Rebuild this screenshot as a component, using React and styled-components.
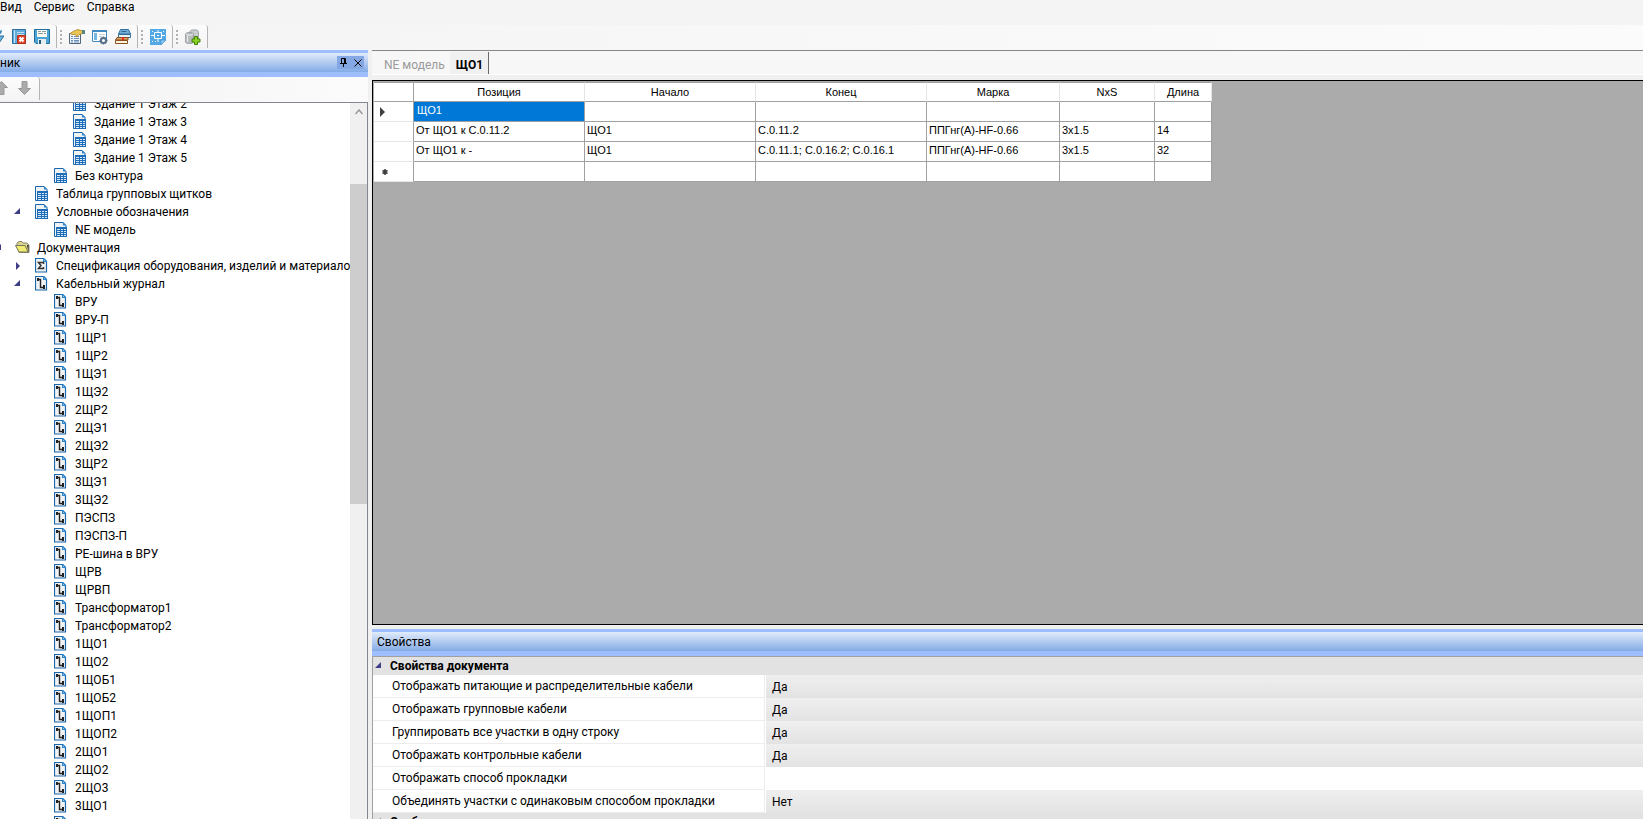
import React from 'react';
import styled, { createGlobalStyle, css } from 'styled-components';

const uiFont = 'Roboto, "Open Sans", sans-serif';
const gridFont = '"Liberation Sans", Arial, sans-serif';

const colors = {
  accent: '#9ebeff',
  line: '#828790',
  gridLine: '#a0a0a0',
  selection: '#0078d7',
  arrow: '#3d3d85'
};

const GlobalStyle = createGlobalStyle`
  * {
    box-sizing: border-box;
  }

  body {
    margin: 0;
    overflow: hidden;
    font-family: ${uiFont};
    font-size: 12px;
    line-height: 18px;
    color: #000;
    background: #f0f0f0;
  }

  button {
    font: inherit;
    color: inherit;
    border: 0;
    padding: 0;
    background: none;
  }
`;

const Window = styled.div`
  display: flex;
  flex-direction: column;
  height: 100vh;
`;

const MenuBar = styled.nav`
  display: flex;
  flex: none;
  gap: 12px;
  height: 25px;
  padding-bottom: 12px;
  align-items: center;
  background: #f4f4f4;
`;

const MenuItem = styled.button`
  line-height: 16px;
`;

const ToolBar = styled.div`
  display: flex;
  flex: none;
  height: 25px;
  background: linear-gradient(to right, #f4f4f4, #fbfbfb);
`;

const ToolGroup = styled.div`
  display: flex;
  align-items: center;
  gap: 7px;
  height: 23px;
  padding: 0 6px 0 ${props => (props.$first ? '0' : '3px')};
  background: linear-gradient(#fcfcfc, #f4f4f4);
  border-right: 1px solid #b4b4b4;
  border-radius: 0 3px 0 0;
`;

const Grip = styled.span`
  width: 2px;
  height: 14px;
  background: repeating-linear-gradient(#b0b0b0 0 2px, transparent 2px 4px);
`;

const ToolButton = styled.button`
  display: flex;
  width: ${props => props.$width || 16}px;
  height: 16px;
  justify-content: flex-end;
  overflow: hidden;

  svg {
    flex: none;
  }
`;

const Workspace = styled.div`
  display: grid;
  flex: 1;
  min-height: 0;
  grid-template-columns: 368px minmax(0, 1fr);
  column-gap: 4px;
`;

const Navigator = styled.aside`
  display: flex;
  flex-direction: column;
  min-height: 0;
`;

const Caption = styled.header`
  display: flex;
  flex: none;
  align-items: center;
  justify-content: space-between;
  height: 27px;
  padding: 0 4px 0 ${props => props.$indent || 0}px;
  border-top: 3px solid ${colors.accent};
  border-bottom: 5px solid ${colors.accent};
  background: linear-gradient(#e1ebfb, #84abe6);
`;

const CaptionButtons = styled.div`
  display: flex;
  gap: 1px;
  height: 13px;
  background: #83a8e4;
`;

const CaptionButton = styled.button`
  display: flex;
  width: 13px;
  height: 13px;
  align-items: center;
  justify-content: center;
`;

const MoveBar = styled.div`
  display: flex;
  flex: none;
  height: 25px;
  background: linear-gradient(to right, #f2f2f2, #fbfbfb);

  ${ToolGroup} {
    padding-right: 8px;
  }
`;

const TreeArea = styled.div`
  display: flex;
  flex: 1;
  min-height: 0;
  border-top: 1px solid ${colors.line};
  border-right: 1px solid ${colors.line};
  background: #fff;
`;

const TreeView = styled.div`
  flex: 1;
  min-width: 0;
  overflow: hidden;
`;

const TreeList = styled.ul`
  list-style: none;
  margin: -8px 0 0;
  padding: 0;
`;

const TreeRow = styled.li`
  display: flex;
  align-items: center;
  height: 18px;
  margin-left: ${props => props.$level * 19 - 5}px;
  gap: 7px;
  white-space: nowrap;

  svg {
    flex: none;
  }
`;

const Expander = styled.button`
  display: flex;
  flex: none;
  width: 6px;
  height: 17px;
  padding-top: 4px;
  justify-content: flex-end;
`;

const TreeIcon = styled.span`
  display: flex;
  flex: none;
  width: ${props => (props.$wide ? 15 : 14)}px;
  margin-left: ${props => (props.$wide ? 7 : 8)}px;
`;

const ScrollTrack = styled.div`
  display: flex;
  flex: none;
  flex-direction: column;
  width: 17px;
  background: #f0f0f0;
`;

const ScrollButton = styled.button`
  display: flex;
  height: 17px;
  align-items: center;
  justify-content: center;
`;

const ScrollThumb = styled.div`
  height: 320px;
  margin-top: 64px;
  background: #cdcdcd;
`;

const Documents = styled.main`
  display: flex;
  flex-direction: column;
  min-height: 0;
`;

const TabStrip = styled.div`
  display: flex;
  flex: none;
  height: 25px;
  margin-bottom: 5px;
  padding-left: 6px;
  border-top: 1px solid #868686;
  border-bottom: 1px solid #fff;
  background: #f7f7f7;
`;

const Tab = styled.button`
  padding: 4px 5px 0 6px;
  color: #9a9a9a;

  ${props =>
    props.$active &&
    css`
      color: #000;
      font-weight: 700;
      background: #f0f0f0;
      border-right: 1px solid #696969;
      margin-top: 1px;
      padding-top: 3px;
    `};
`;

const GridArea = styled.section`
  flex: 1;
  min-height: 0;
  padding: 1px;
  border: 1px solid #000;
  border-right: 0;
  background: #ababab;
`;

const JournalTable = styled.table`
  table-layout: fixed;
  width: 838px;
  border-collapse: separate;
  border-spacing: 0;
  font-family: ${gridFont};
  font-size: 11px;
  line-height: 15px;
  background: #fff;
`;

const HeadCell = styled.th`
  height: 20px;
  padding: 0;
  font-weight: 400;
  border-top: 1px solid ${colors.gridLine};
  border-bottom: 1px solid ${colors.gridLine};
  border-right: 1px solid ${props => (props.$dark ? colors.gridLine : '#e5e5e5')};
`;

const Cell = styled.td`
  height: 20px;
  padding: 0 2px 3px;
  vertical-align: middle;
  white-space: nowrap;
  border-right: 1px solid ${colors.gridLine};
  border-bottom: 1px solid ${colors.gridLine};

  ${props =>
    props.$selected &&
    css`
      color: #fff;
      background: ${colors.selection};
      padding-left: 3px;
    `};
`;

const RowMarker = styled.th`
  height: 20px;
  padding: 0 0 0 6px;
  border-right: 1px solid ${colors.gridLine};
  border-bottom: 1px solid #e5e5e5;

  svg {
    display: block;
  }
`;

const Properties = styled.section`
  flex: none;
  height: 190px;
  margin-top: 4px;
  overflow: hidden;
`;

const PropertyTable = styled.table`
  table-layout: fixed;
  width: 100%;
  border-spacing: 0;
  border-top: 1px solid #a0a0a0;
  border-left: 1px solid #a0a0a0;
  background: #fff;
`;

const GroupCell = styled.th`
  height: 18px;
  padding: 1px 0 0 2px;
  text-align: left;
  line-height: 17px;
  background: #e2e2e2;
`;

const GroupButton = styled.button`
  display: flex;
  gap: 9px;
  font-weight: 700;
`;

const PropertyName = styled.th`
  height: 23px;
  padding: 0 0 0 19px;
  text-align: left;
  font-weight: 400;
  white-space: nowrap;
  border-right: 1px solid #ededed;
  border-bottom: 1px solid #ededed;
`;

const PropertyValue = styled.td`
  height: 23px;
  padding: 0 0 0 6px;
  border-left: 1px solid #fff;
  background: ${props =>
    props.$empty ? '#fff' : 'linear-gradient(#efefef, #e3e3e3)'};
`;

function ArrowOpen() {
  return (
    <svg width="6" height="6" viewBox="0 0 6 6">
      <path d="M6 0v6H0z" fill={colors.arrow} />
    </svg>
  );
}

function ArrowClosed() {
  return (
    <svg width="5" height="8" viewBox="0 0 5 8">
      <path d="M1 0l4 4-4 4z" fill={colors.arrow} />
    </svg>
  );
}

function SheetIcon() {
  return (
    <svg width="14" height="16" viewBox="0 0 14 16">
      <path d="M.5.5h8.500l3 3v11H.5z" fill="#f0f3f4" stroke="#1b66ac" />
      <path d="M9 0l3.500 3.500H9z" fill="#2e84cb" />
      <path d="M2 5h11v10H2z" fill="#1f6cb8" />
      <path
        d="M3 7h3v1H3zM7 7h2v1H7zM10 7h2v1h-2zM3 9h3v1H3zM7 9h2v1H7zM10 9h2v1h-2zM3 11h3v1H3zM7 11h2v1H7zM10 11h2v1h-2zM3 13h3v1H3zM7 13h2v1H7zM10 13h2v1h-2z"
        fill="#d6eaf8"
      />
    </svg>
  );
}

function Page({ children }) {
  return (
    <svg width="13" height="16" viewBox="0 0 13 16">
      <path d="M.5.5h8l3 3v10.500H.5z" fill="#f0f3f4" stroke="#1b66ac" strokeWidth="1.2" />
      <path d="M8 0h1l3 3v1H8z" fill="#2e84cb" />
      <path d="M9 2l1 1H9z" fill="#fff" />
      {children}
    </svg>
  );
}

function JournalIcon() {
  return (
    <Page>
      <path d="M2 2h2v3H2zM8 9h2v4H8z" fill="#222" />
      <path d="M3 3.500h2.500v8H9" fill="none" stroke="#222" strokeWidth="1.4" />
    </Page>
  );
}

function SumIcon() {
  return (
    <Page>
      <path d="M8.500 6V4.500H3.500l2.500 3-2.500 3h5V9" fill="none" stroke="#333" strokeWidth="1.5" />
    </Page>
  );
}

function FolderIcon() {
  return (
    <svg width="15" height="15" viewBox="0 0 15 15">
      <path d="M2 4V2l2-1.500h3l1 1.500h4l2 2v7.500H4z" fill="#dad58c" stroke="#8a8770" />
      <path d="M.5 4.500h9.500l3 6.500H4z" fill="#f0ec72" stroke="#77755c" />
      <path d="M12 4l1.500 7.500V4z" fill="#222" />
    </svg>
  );
}

function RefreshIcon() {
  return (
    <svg width="16" height="16" viewBox="0 0 16 16">
      <path d="M9 3l5-2-1 4z" fill="#2f7fb5" />
      <path d="M8 7h8l-5 7z" fill="#6bb4dc" stroke="#2a6e9f" />
    </svg>
  );
}

function BookCloseIcon() {
  return (
    <svg width="16" height="16" viewBox="-1 0 16 16">
      <path d="M.5.5h13v14H.5z" fill="#5fabdc" stroke="#2c6f9f" />
      <path d="M2.500 1v13" stroke="#c5e2f4" />
      <path d="M5 3.500h7M5 5.500h7" stroke="#b9dcf2" />
      <path d="M5.500 6.500h8v8h-8z" fill="#e2442a" stroke="#b5301c" />
      <path d="M7.500 8.500l4 4M11.500 8.500l-4 4" stroke="#fff" strokeWidth="2" />
    </svg>
  );
}

function SaveIcon() {
  return (
    <svg width="16" height="16" viewBox="0 0 16 16">
      <path d="M.5.5h15v14H2L.5 13z" fill="#4ba4d4" stroke="#1d6f9f" />
      <path d="M3 1h10v7H3z" fill="#fbfbf4" />
      <path d="M4 2.500h3M8 2.500h4M4 4.500h5M10 4.500h2" stroke="#8a9aa2" />
      <path d="M4 10h8v5H4z" fill="#e6edf0" />
      <path d="M5 11h2v4H5z" fill="#245c7c" />
    </svg>
  );
}

function PropertiesIcon() {
  return (
    <svg width="16" height="16" viewBox="0 0 16 16">
      <path d="M.5 4.500h11v10H.5z" fill="#eef4fa" stroke="#52657d" />
      <path d="M2 7.500h2M5 7.500h5M2 9.500h2M5 9.500h5M2 11.500h2M5 11.500h5M2 13h2M5 13h5" stroke="#6d8fbc" />
      <path d="M1 4.500L5 2l4-1.500 3 1h2v3l-4 1-2 2.500-1.500-2.500H3z" fill="#e8c653" stroke="#a57a18" strokeWidth=".7" />
      <path d="M13 1h3v4h-3z" fill="#5b8784" />
    </svg>
  );
}

function SettingsIcon() {
  return (
    <svg width="16" height="16" viewBox="0 0 16 16">
      <path d="M.5 1.500h14v11H.5z" fill="#fff" stroke="#428ac0" />
      <path d="M0 1h15v2H0z" fill="#428ac0" />
      <path d="M2 4h3v7H2z" fill="#75b7e2" />
      <path d="M7 5.500h6M7 7.500h3" stroke="#c9d5dd" />
      <circle cx="11.500" cy="11.500" r="2.500" fill="#fff" stroke="#59718a" strokeWidth="2" />
      <path
        d="M11.500 7.500v1.500M11.500 14v1.500M7.500 11.500h1.500M14 11.500h1.500M8.700 8.700l1 1M13.300 13.300l1 1M8.700 14.300l1-1M13.300 9.700l1-1"
        stroke="#59718a"
        strokeWidth="1.5"
      />
    </svg>
  );
}

function BooksIcon() {
  return (
    <svg width="16" height="16" viewBox="0 0 16 16">
      <path d="M5.500.5h8l2 4.500h-12z" fill="#6fb0dc" stroke="#346d98" />
      <path d="M6.500 2.500h5" stroke="#2f648c" />
      <path d="M3.500 5.500h12v3h-12z" fill="#e9f4fa" stroke="#346d98" />
      <path d="M2 8.500h11v2.500H.5z" fill="#d9a361" stroke="#885022" />
      <path d="M.5 11.500h12v3H.5z" fill="#fff5df" stroke="#885022" />
      <path d="M7 8h2v4l-1-1-1 1z" fill="#e52b19" />
    </svg>
  );
}

function PlanIcon() {
  return (
    <svg width="16" height="16" viewBox="0 0 16 16">
      <path d="M0 0h16v11l-5 5H0z" fill="#53a9e5" />
      <path d="M4.500 3.500h7v6h-7zM8 1v2.500M8 10v3M1 6.500h3M12 6.500h3" fill="none" stroke="#fff" />
      <path d="M7 6h2v1H7zM2 2h1v1H2zM13 2h1v1h-1zM2 12h1v1H2zM5 12h1v1H5z" fill="#fff" />
      <path d="M16 11h-5v5z" fill="#8cc8f0" stroke="#3185c1" strokeWidth=".5" />
    </svg>
  );
}

function DatabaseAddIcon() {
  return (
    <svg width="16" height="16" viewBox="0 0 16 16">
      <path d="M5 2.500C5 .3 13.500.3 13.500 2.500V10c0 2-8.500 2-8.500 0z" fill="#c9cdd0" stroke="#8b8f92" strokeWidth=".7" />
      <path d="M.5 5c0-2 8-2 8 0v8c0 2-8 2-8 0z" fill="#b7bbbe" stroke="#8b8f92" strokeWidth=".7" />
      <path d="M1 5c1 1.500 6 1.500 7 0" fill="none" stroke="#f7f7f7" />
      <path d="M2.500 7v6" stroke="#eee" />
      <path d="M9.500 7.500h3v2.500H15v3h-2.500v2.500h-3V13H7v-3h2.500z" fill="#8bd120" stroke="#3f8108" />
    </svg>
  );
}

function MoveArrow({ up }) {
  return (
    <svg width="13" height="14" viewBox="0 0 13 14">
      <path
        d={up ? 'M6.500.5l6 6H9v7H4v-7H.5z' : 'M4 .5h5v7h3.500l-6 6-6-6H4z'}
        fill="#ababab"
        stroke="#989898"
      />
    </svg>
  );
}

function PinIcon() {
  return (
    <svg width="7" height="9" viewBox="0 0 7 9">
      <path d="M1.500 5V.5h4V5M4.500 0v5M0 5.500h7M3.500 6v3" fill="none" stroke="#000" />
    </svg>
  );
}

function CloseIcon() {
  return (
    <svg width="8" height="8" viewBox="0 0 8 8">
      <path d="M.5.5l7 7M7.500.5l-7 7" stroke="#000" />
    </svg>
  );
}

function CurrentRowIcon() {
  return (
    <svg width="6" height="10" viewBox="0 0 6 10">
      <path d="M0 0l5 5-5 5z" fill="#404040" />
    </svg>
  );
}

function NewRowIcon() {
  return (
    <svg width="10" height="6" viewBox="0 0 10 6">
      <path d="M5 0v6M2.500 1.500l5 3M7.500 1.500l-5 3" stroke="#404040" strokeWidth="1.5" />
    </svg>
  );
}

const treeIcons = {
  sheet: SheetIcon,
  sum: SumIcon,
  journal: JournalIcon,
  folder: FolderIcon
};

const journals = [
  'ВРУ', 'ВРУ-П', '1ЩР1', '1ЩР2', '1ЩЭ1', '1ЩЭ2', '2ЩР2', '2ЩЭ1', '2ЩЭ2',
  '3ЩР2', '3ЩЭ1', '3ЩЭ2', 'ПЭСПЗ', 'ПЭСПЗ-П', 'РЕ-шина в ВРУ', 'ЩРВ', 'ЩРВП',
  'Трансформатор1', 'Трансформатор2', '1ЩО1', '1ЩО2', '1ЩОБ1', '1ЩОБ2',
  '1ЩОП1', '1ЩОП2', '2ЩО1', '2ЩО2', '2ЩО3', '3ЩО1', '3ЩО2'
];

const tree = [
  { level: 3, icon: 'sheet', label: 'Здание 1 Этаж 2' },
  { level: 3, icon: 'sheet', label: 'Здание 1 Этаж 3' },
  { level: 3, icon: 'sheet', label: 'Здание 1 Этаж 4' },
  { level: 3, icon: 'sheet', label: 'Здание 1 Этаж 5' },
  { level: 2, icon: 'sheet', label: 'Без контура' },
  { level: 1, icon: 'sheet', label: 'Таблица групповых щитков' },
  { level: 1, icon: 'sheet', label: 'Условные обозначения', state: 'open' },
  { level: 2, icon: 'sheet', label: 'NE модель' },
  { level: 0, icon: 'folder', label: 'Документация', state: 'open' },
  { level: 1, icon: 'sum', label: 'Спецификация оборудования, изделий и материалов', state: 'closed' },
  { level: 1, icon: 'journal', label: 'Кабельный журнал', state: 'open' },
  ...journals.map(label => ({ level: 2, icon: 'journal', label }))
];

const columns = [
  { title: 'Позиция', width: 171 },
  { title: 'Начало', width: 171 },
  { title: 'Конец', width: 171 },
  { title: 'Марка', width: 133 },
  { title: 'NxS', width: 95 },
  { title: 'Длина', width: 57 }
];

const cables = [
  ['ЩО1', '', '', '', '', ''],
  ['От ЩО1 к С.0.11.2', 'ЩО1', 'С.0.11.2', 'ППГнг(А)-HF-0.66', '3x1.5', '14'],
  ['От ЩО1 к -', 'ЩО1', 'С.0.11.1; С.0.16.2; С.0.16.1', 'ППГнг(А)-HF-0.66', '3x1.5', '32'],
  ['', '', '', '', '', '']
];

const properties = [
  ['Отображать питающие и распределительные кабели', 'Да'],
  ['Отображать групповые кабели', 'Да'],
  ['Группировать все участки в одну строку', 'Да'],
  ['Отображать контрольные кабели', 'Да'],
  ['Отображать способ прокладки', ''],
  ['Объединять участки с одинаковым способом прокладки', 'Нет']
];

function MainToolBar() {
  return (
    <ToolBar>
      <ToolGroup $first>
        <ToolButton $width={4} aria-label="Обновить"><RefreshIcon /></ToolButton>
        <ToolButton aria-label="Закрыть"><BookCloseIcon /></ToolButton>
        <ToolButton aria-label="Сохранить"><SaveIcon /></ToolButton>
      </ToolGroup>
      <ToolGroup>
        <Grip />
        <ToolButton aria-label="Свойства"><PropertiesIcon /></ToolButton>
        <ToolButton aria-label="Настройки"><SettingsIcon /></ToolButton>
        <ToolButton aria-label="Справочники"><BooksIcon /></ToolButton>
      </ToolGroup>
      <ToolGroup>
        <Grip />
        <ToolButton aria-label="План"><PlanIcon /></ToolButton>
      </ToolGroup>
      <ToolGroup>
        <Grip />
        <ToolButton aria-label="Добавить базу"><DatabaseAddIcon /></ToolButton>
      </ToolGroup>
    </ToolBar>
  );
}

function TreeItem({ item }) {
  const Icon = treeIcons[item.icon];

  return (
    <TreeRow $level={item.level}>
      <Expander as={item.state ? 'button' : 'span'} aria-label={item.state && item.label}>
        {item.state === 'open' && <ArrowOpen />}
        {item.state === 'closed' && <ArrowClosed />}
      </Expander>
      <TreeIcon $wide={item.icon === 'folder'}>
        <Icon />
      </TreeIcon>
      {item.label}
    </TreeRow>
  );
}

function NavigatorPanel() {
  return (
    <Navigator>
      <Caption>
        ник
        <CaptionButtons>
          <CaptionButton aria-label="Закрепить"><PinIcon /></CaptionButton>
          <CaptionButton aria-label="Закрыть панель"><CloseIcon /></CaptionButton>
        </CaptionButtons>
      </Caption>
      <MoveBar>
        <ToolGroup $first>
          <ToolButton $width={8} aria-label="Вверх"><MoveArrow up /></ToolButton>
          <ToolButton aria-label="Вниз"><MoveArrow /></ToolButton>
        </ToolGroup>
      </MoveBar>
      <TreeArea>
        <TreeView>
          <TreeList>
            {tree.map(item => (
              <TreeItem key={item.label} item={item} />
            ))}
          </TreeList>
        </TreeView>
        <ScrollTrack>
          <ScrollButton aria-label="Прокрутить вверх">
            <svg width="8" height="6" viewBox="0 0 8 6">
              <path d="M.5 5L4 1l3.500 4" fill="none" stroke="#9a9a9a" strokeWidth="1.5" />
            </svg>
          </ScrollButton>
          <ScrollThumb />
        </ScrollTrack>
      </TreeArea>
    </Navigator>
  );
}

function CableJournal() {
  return (
    <GridArea>
      <JournalTable>
        <colgroup>
          <col width="40" />
          {columns.map(column => (
            <col key={column.title} width={column.width} />
          ))}
        </colgroup>
        <thead>
          <tr>
            <HeadCell $dark />
            {columns.map(column => (
              <HeadCell key={column.title}>{column.title}</HeadCell>
            ))}
          </tr>
        </thead>
        <tbody>
          {cables.map((cells, row) => (
            <tr key={row}>
              <RowMarker>
                {row === 0 && <CurrentRowIcon />}
                {row === cables.length - 1 && <NewRowIcon />}
              </RowMarker>
              {cells.map((text, i) => (
                <Cell key={i} $selected={row === 0 && i === 0}>
                  {text}
                </Cell>
              ))}
            </tr>
          ))}
        </tbody>
      </JournalTable>
    </GridArea>
  );
}

function PropertyGroup({ title }) {
  return (
    <tr>
      <GroupCell colSpan={2}>
        <GroupButton>
          <Expander as="span">
            <ArrowOpen />
          </Expander>
          {title}
        </GroupButton>
      </GroupCell>
    </tr>
  );
}

function PropertiesPanel() {
  return (
    <Properties>
      <Caption $indent={5}>Свойства</Caption>
      <PropertyTable>
        <colgroup>
          <col width="392" />
          <col />
        </colgroup>
        <tbody>
          <PropertyGroup title="Свойства документа" />
          {properties.map(([name, value]) => (
            <tr key={name}>
              <PropertyName>{name}</PropertyName>
              <PropertyValue $empty={!value}>{value}</PropertyValue>
            </tr>
          ))}
          <PropertyGroup title="Особые" />
        </tbody>
      </PropertyTable>
    </Properties>
  );
}

export default function App() {
  return (
    <Window>
      <GlobalStyle />
      <MenuBar>
        <MenuItem>Вид</MenuItem>
        <MenuItem>Сервис</MenuItem>
        <MenuItem>Справка</MenuItem>
      </MenuBar>
      <MainToolBar />
      <Workspace>
        <NavigatorPanel />
        <Documents>
          <TabStrip>
            <Tab>NE модель</Tab>
            <Tab $active>ЩО1</Tab>
          </TabStrip>
          <CableJournal />
          <PropertiesPanel />
        </Documents>
      </Workspace>
    </Window>
  );
}
